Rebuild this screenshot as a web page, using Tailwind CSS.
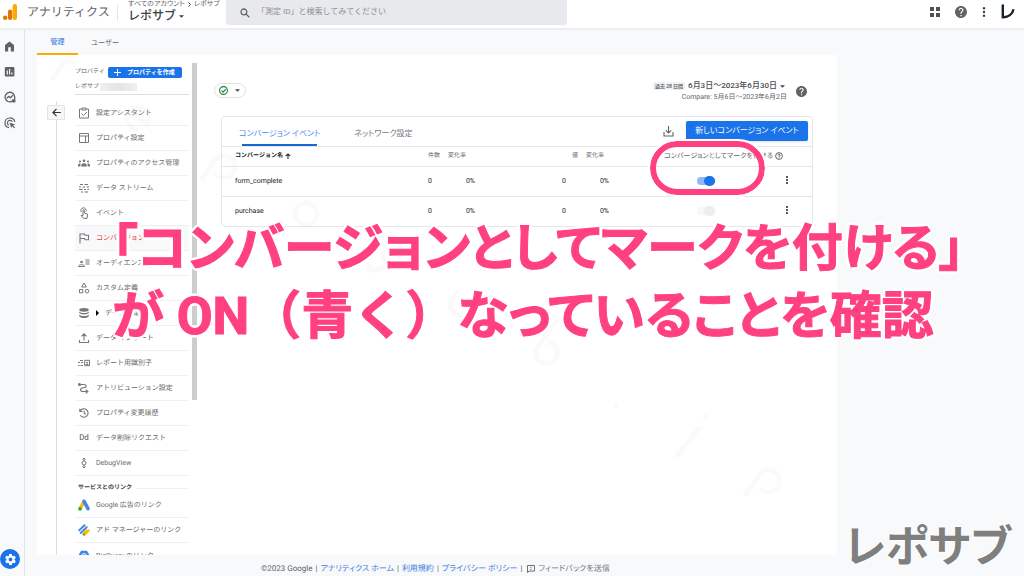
<!DOCTYPE html>
<html lang="ja">
<head>
<meta charset="utf-8">
<meta name="viewport" content="width=device-width, initial-scale=1">
<title>アナリティクス - コンバージョン</title>
<script src="https://cdn.jsdelivr.net/npm/@tailwindcss/browser@4"></script>
</head>
<body class="relative flex h-screen flex-col overflow-hidden bg-[#f8f9fb] font-['Roboto','Noto_Sans_CJK_JP',sans-serif] text-[7px] leading-[10px] text-[#5f6368] [text-rendering:geometricPrecision]">

<header class="flex h-[30px] shrink-0 items-start border-b-2 border-[#eceef1] bg-white">
  <svg class="mt-[4px] ml-[3px] h-4 w-[14px] shrink-0" viewBox="0 0 14 16" aria-hidden="true"><rect x="9.700" y="0" width="4.300" height="16" rx="2.100" fill="#f9ab00"/><rect x="5" y="5.500" width="4.300" height="10.500" rx="2.100" fill="#e37400"/><circle cx="2.200" cy="13.800" r="2.200" fill="#e37400"/></svg>
  <span class="mt-[4px] ml-[10px] w-[90px] shrink-0 text-[12px] leading-4 whitespace-nowrap">アナリティクス</span>
  <span class="mt-1 h-[17px] w-px shrink-0 bg-[#e4e6e9]"></span>
  <div class="ml-[10px] w-[98px] shrink-0 whitespace-nowrap">
    <div class="flex h-[9px] items-center gap-[3px] text-[7px] leading-[9px] [font-feature-settings:'palt']"><span>すべてのアカウント</span>
      <svg class="h-[5px] w-[3px]" viewBox="0 0 3 5" fill="none" stroke="#444" stroke-width="1"><path d="M.5.5l2 2-2 2"/></svg><span>レポサブ</span></div>
    <button class="flex items-center gap-[3px] text-[12px] leading-[14px] font-medium text-[#3c4043]">レポサブ
      <svg class="h-[3px] w-[5px]" viewBox="0 0 6 3" fill="#3c4043"><path d="M0 0h6L3 3z"/></svg></button>
  </div>
  <label class="flex h-[25px] w-[341px] items-center rounded-b-[3px] bg-[#e8e9ed] pl-[14px]">
    <svg class="h-[10px] w-[10px] shrink-0" viewBox="0 0 10 10" fill="none" stroke="#5f6368" stroke-width="1.300"><circle cx="3.900" cy="3.900" r="2.900"/><path d="M6.100 6.100l3.200 3.200"/></svg>
    <input type="text" aria-label="検索" placeholder="「測定 ID」と検索してみてください" class="mb-[2px] ml-[7px] min-w-0 flex-1 bg-transparent text-[8px] leading-3 outline-none placeholder:text-[#8b8f94]">
  </label>
  <div class="mt-[4px] mr-[9px] ml-auto flex items-center gap-[15px]">
    <button aria-label="アプリ"><svg class="block h-[10px] w-[10px]" viewBox="0 0 10 10" fill="#4d5156"><path d="M0 0h4v4H0zM6 0h4v4H6zM0 6h4v4H0zM6 6h4v4H6z"/></svg></button>
    <button aria-label="ヘルプ"><svg class="block h-[12px] w-[12px]" viewBox="2 2 20 20" fill="#5f6368"><path d="M12 2C6.500 2 2 6.500 2 12s4.500 10 10 10 10-4.500 10-10S17.500 2 12 2zm1 17h-2v-2h2v2zm2.100-7.700-.9.900C13.400 12.900 13 13.500 13 15h-2v-.5c0-1.100.4-2.100 1.200-2.800l1.200-1.300c.4-.3.6-.8.6-1.400 0-1.100-.9-2-2-2s-2 .9-2 2H8c0-2.200 1.800-4 4-4s4 1.800 4 4c0 .9-.4 1.700-.9 2.300z"/></svg></button>
    <button aria-label="メニュー"><svg class="block h-[10px] w-[4px]" viewBox="0 0 4 10" fill="#3c4043"><circle cx="2" cy="1.200" r="1.200"/><circle cx="2" cy="5" r="1.200"/><circle cx="2" cy="8.800" r="1.200"/></svg></button>
    <button aria-label="アカウント"><svg class="block h-[15px] w-[14px]" viewBox="0 0 14 15" fill="none" stroke="#15232e" stroke-width="2.400"><path d="M1.800.5v12.700c5.500.2 9.700-3 10.700-8"/></svg></button>
  </div>
</header>

<div class="flex min-h-0 flex-1">
  <nav class="flex w-[25px] shrink-0 flex-col items-start border-r border-[#dfe1e5] pt-[11px]" aria-label="メイン">
    <div class="flex flex-col gap-[14px] pl-[4px]">
      <a href="#" aria-label="ホーム"><svg class="block h-[11px] w-[11px]" viewBox="0 0 11 11" fill="#5f6368"><path d="M5.500.5L1 4v6.500h3.200V6.300h2.600v4.200H10V4z"/></svg></a>
      <a href="#" aria-label="レポート"><svg class="block h-[11px] w-[11px]" viewBox="0 0 11 11"><rect x=".8" y="1" width="9.600" height="9.400" rx="1.200" fill="#5f6368"/><path d="M3.300 4.500v4M5.600 3v5.500M7.900 6.500v2" stroke="#fff" stroke-width="1.100"/></svg></a>
      <a href="#" aria-label="探索"><svg class="block h-[12px] w-[12px]" viewBox="0 0 12 12" fill="none" stroke="#5f6368" stroke-width="1.300"><path d="M8 10.400A4.800 4.800 0 1 1 10.700 6v4.600H8"/><path d="M2.800 7.300l2-2 1.600 1.500 2.500-2.600"/><path d="M8.300 8.500l2.500 2.500" stroke-width="2"/></svg></a>
      <a href="#" aria-label="広告"><svg class="block h-[12px] w-[12px]" viewBox="0 0 12 12" fill="none" stroke="#5f6368" stroke-width="1.200"><path d="M5 10.700A4.900 4.900 0 1 1 10.700 5"/><path d="M4.800 8.300A2.600 2.600 0 1 1 8.300 4.800"/><path d="M5.500 5.500l5.600 1.900-2 1 2 2.200-.8.700-2.200-2-.9 1.800z" fill="#5f6368" stroke="none"/></svg></a>
    </div>
    <button aria-label="管理" class="mt-auto mb-[7px] flex h-[20px] w-[20px] items-center justify-center rounded-full bg-[#1a73e8]">
      <svg class="h-[13px] w-[13px]" viewBox="0 0 24 24" fill="#fff"><path d="M19.430 12.980c.04-.32.070-.64.070-.98s-.030-.66-.070-.98l2.110-1.650c.19-.15.240-.42.120-.64l-2-3.460c-.12-.22-.39-.3-.61-.22l-2.490 1c-.52-.4-1.080-.73-1.690-.98l-.38-2.650C14.460 2.180 14.250 2 14 2h-4c-.25 0-.46.180-.49.420l-.38 2.650c-.61.250-1.170.59-1.690.98l-2.490-1c-.23-.09-.49 0-.61.220l-2 3.460c-.13.220-.07.490.12.640l2.110 1.650c-.04.320-.07.650-.07.980s.03.660.07.980l-2.110 1.650c-.19.150-.24.420-.12.640l2 3.460c.12.220.39.300.61.220l2.490-1c.52.400 1.080.730 1.690.980l.38 2.650c.03.240.24.420.49.420h4c.25 0 .46-.18.490-.42l.38-2.650c.61-.25 1.170-.59 1.690-.98l2.490 1c.23.090.49 0 .61-.22l2-3.460c.12-.22.070-.49-.12-.64l-2.110-1.650zM12 15.500c-1.930 0-3.500-1.570-3.500-3.500s1.570-3.500 3.500-3.500 3.500 1.570 3.500 3.500-1.570 3.500-3.500 3.500z"/></svg>
    </button>
  </nav>

  <div class="flex min-w-0 flex-1 flex-col pl-[12px]">
    <div class="flex h-[25px] shrink-0" role="tablist">
      <button role="tab" aria-selected="true" class="w-[41px] border-b-2 border-[#f9ab00] text-[7px] font-medium text-[#3f7fe0]">管理</button>
      <button role="tab" class="w-[54px] text-[7px]">ユーザー</button>
    </div>

    <div class="mr-[187px] flex min-h-0 flex-1 overflow-hidden bg-white">
      <div class="flex w-[38px] shrink-0 flex-col items-center pt-[46px]">
        <span class="h-1 w-px bg-[#dcdcdc]"></span>
        <button aria-label="戻る" class="flex h-[15px] w-[18px] items-center justify-center rounded-[1px] border border-[#e4e4e4] bg-[#f7f7f7]"><svg class="h-[9px] w-[9px]" viewBox="0 0 9 9" fill="none" stroke="#333" stroke-width="1.200"><path d="M8.800 4.500H1M4.500.8L.9 4.500l3.600 3.700"/></svg></button>
        <span class="w-px flex-1 bg-[#dcdcdc]"></span>
      </div>

      <section class="w-[114px] shrink-0 pt-[11px]">
        <div class="flex h-[12px] items-center justify-between pr-[7px] text-[6px]"><span>プロパティ</span>
          <button class="flex h-[11px] w-[74px] items-center gap-[6px] rounded-[2px] bg-[#1a73e8] pl-[6px] font-bold text-white"><svg class="h-[7px] w-[7px]" viewBox="0 0 7 7" stroke="#fff"><path d="M3.500 0v7M0 3.500h7"/></svg>プロパティを作成</button></div>
        <div class="mt-[4px] mb-[6px] flex h-[13px] items-start gap-[1px] border-b border-[#e0e0e0] text-[6px]"><span>レポサブ</span><span class="mt-px h-2 w-[37px] bg-linear-to-r from-[#f0f0f0] via-[#e4e4e4] to-[#efefef]"></span></div>
        <ul class="text-[7px] whitespace-nowrap text-[#66696d]">
          <li><a href="#" class="flex h-[25px] items-center gap-[6px] border-b border-[#f0f0f0] pl-[3px]"><svg class="h-3 w-3" viewBox="0 0 12 12" fill="none" stroke="#777"><path d="M4 2H1.500v9h9V2H8"/><path d="M4 1h4v2H4z"/><path d="M3.500 6.500l2 2 3.500-3.500"/></svg>設定アシスタント</a></li>
          <li><a href="#" class="flex h-[25px] items-center gap-[6px] border-b border-[#f0f0f0] pl-[3px]"><svg class="h-3 w-3" viewBox="0 0 12 12" fill="none" stroke="#777"><path d="M1.500 1.500h9v9h-9zM1.500 4h9M7.500 4v6.500"/></svg>プロパティ設定</a></li>
          <li><a href="#" class="flex h-[25px] items-center gap-[6px] border-b border-[#f0f0f0] pl-[3px]"><svg class="h-3 w-3" viewBox="0 0 12 12" fill="#777"><circle cx="6" cy="3.800" r="1.400"/><circle cx="2" cy="4.500" r="1.100"/><circle cx="10" cy="4.500" r="1.100"/><path d="M3.300 9.500V8c0-2.400 5.400-2.400 5.400 0v1.500zM0 9.500V8.200c0-1.400 1.300-1.800 2.600-1.500-.3.700-.2 2-.2 2.800zM12 9.500V8.200c0-1.400-1.300-1.800-2.600-1.500.3.700.2 2 .2 2.800z"/></svg>プロパティのアクセス管理</a></li>
          <li><a href="#" class="flex h-[25px] items-center gap-[6px] border-b border-[#f0f0f0] pl-[3px]"><svg class="h-3 w-3" viewBox="0 0 12 12" fill="none" stroke="#777" stroke-width="1.100"><path d="M2 2.500h3M6.500 2.500H10M1 5h2M4.500 5H7M8.500 5H11M1 7.500h3.500M6 7.500h2M9.500 7.500H11M3 10h2M6.500 10H10"/></svg>データ ストリーム</a></li>
          <li><a href="#" class="flex h-[25px] items-center gap-[6px] border-b border-[#f0f0f0] pl-[3px]"><svg class="h-3 w-3" viewBox="0 0 12 12" fill="none" stroke="#777"><path d="M3.200 5A2.700 2.700 0 1 1 8 4.500"/><path d="M5 8.500V3.200c0-.9 1.300-.9 1.300 0v2.900l3.200.9-.4 4.300H5.500L3 8.500z"/></svg>イベント</a></li>
          <li><a href="#" class="flex h-[25px] items-center gap-[6px] border-b border-[#f0f0f0] bg-[#f8f9fb] pl-[3px] text-[#dc4437]"><svg class="h-3 w-3" viewBox="0 0 12 12" fill="none" stroke="#777" stroke-width="1.100"><path d="M2 11.500V2h4.500l.5 1.200h3.500v4.600H7L6.500 6.500H2"/></svg>コンバージョン</a></li>
          <li><a href="#" class="flex h-[25px] items-center gap-[6px] border-b border-[#f0f0f0] pl-[3px]"><svg class="h-3 w-3" viewBox="0 0 12 12" fill="none" stroke="#777"><circle cx="3.500" cy="5" r="1.300" fill="#777" stroke="none"/><path d="M.5 9.500c0-2.500 6-2.500 6 0zM7.500 3h4M7.500 5h4M7.500 7h4"/></svg>オーディエンス</a></li>
          <li><a href="#" class="flex h-[25px] items-center gap-[6px] border-b border-[#f0f0f0] pl-[3px]"><svg class="h-3 w-3" viewBox="0 0 12 12" fill="none" stroke="#777"><path d="M6 1l2.300 4H3.700zM1.500 7.500h3.300v3.300H1.500z"/><circle cx="9" cy="9.200" r="1.800"/></svg>カスタム定義</a></li>
          <li><a href="#" class="flex h-[25px] items-center gap-[2px] border-b border-[#f0f0f0] pl-[3px]"><svg class="h-3 w-3" viewBox="0 0 12 12" fill="#777"><ellipse cx="6" cy="2.800" rx="4.800" ry="1.900"/><path d="M1.200 4.500c1.500 2 8.100 2 9.600 0v1.300c-1 2.300-8.600 2.300-9.600 0zM1.200 7.500c1.500 2 8.100 2 9.600 0v1.500c-1 2.700-8.600 2.700-9.600 0z"/></svg><svg class="mx-[4px] h-[6px] w-[3px]" viewBox="0 0 3 6"><path d="M0 0l3 3-3 3z"/></svg>データ設定</a></li>
          <li><a href="#" class="flex h-[25px] items-center gap-[6px] border-b border-[#f0f0f0] pl-[3px]"><svg class="h-3 w-3" viewBox="0 0 12 12" fill="none" stroke="#777" stroke-width="1.100"><path d="M6 8.500V2M3.500 4.300L6 1.800l2.500 2.500M1.500 8v2.500h9V8"/></svg>データ インポート</a></li>
          <li><a href="#" class="flex h-[25px] items-center gap-[6px] border-b border-[#f0f0f0] pl-[3px]"><svg class="h-3 w-3" viewBox="0 0 12 12" fill="none" stroke="#777"><path d="M2 3.500h3M0 5.500h2M3 5.500h2M0 8.500h1.500M2.500 8.500H5M6.700 3.300h4.800v5.400H6.700z"/><path d="M8 8c0-1.500 2.200-1.500 2.200 0" fill="#777"/><circle cx="9.100" cy="5.500" r=".5"/></svg>レポート用識別子</a></li>
          <li><a href="#" class="flex h-[25px] items-center gap-[6px] border-b border-[#f0f0f0] pl-[3px]"><svg class="h-3 w-3" viewBox="0 0 12 12" fill="none" stroke="#777" stroke-width="1.100"><path d="M0 2.500h5.500c3.500 0 3.500 3 0 3.300-4 .3-4 3.700 0 3.700H9"/><circle cx="1.500" cy="2.500" r="1"/><path d="M7.700 7.600l2.200 1.900-2.200 1.900"/></svg>アトリビューション設定</a></li>
          <li><a href="#" class="flex h-[25px] items-center gap-[6px] border-b border-[#f0f0f0] pl-[3px]"><svg class="h-3 w-3" viewBox="0 0 12 12" fill="none" stroke="#777" stroke-width="1.100"><path d="M2.200 4A4.200 4.200 0 1 1 2.300 8.200M1.800 1.800v2.700h2.700M6.200 3.800v2.500l1.800 1"/></svg>プロパティ変更履歴</a></li>
          <li><a href="#" class="flex h-[25px] items-center gap-[6px] border-b border-[#f0f0f0] pl-[3px]"><span class="w-3 text-center text-[8px] font-medium text-[#777]">Dd</span>データ削除リクエスト</a></li>
          <li><a href="#" class="flex h-[25px] items-center gap-[6px] border-b border-[#f0f0f0] pl-[3px]"><svg class="h-3 w-3" viewBox="0 0 12 12" fill="none" stroke="#777"><path d="M6 1v3M6 8v3M4.500 2.500L6 1l1.500 1.500M4.500 9.500L6 11l1.500-1.500"/><circle cx="6" cy="6" r="2"/></svg>DebugView</a></li>
        </ul>
        <h2 class="flex h-[17px] items-center gap-1 pt-[7px] pl-[3px] text-[6px] leading-[10px] font-bold whitespace-nowrap text-[#3c4043]">サービスとのリンク<span class="h-px flex-1 bg-[#f0f0f0]"></span></h2>
        <ul class="text-[7px] whitespace-nowrap text-[#66696d]">
          <li><a href="#" class="flex h-[25px] items-center gap-[6px] border-b border-[#f0f0f0] pl-[3px]"><svg class="h-3 w-3" viewBox="0 0 12 12" fill="none" stroke-width="3.600" stroke-linecap="round"><path d="M6 2.500L2.200 9.500" stroke="#fbbc04"/><path d="M6 2.300l4 7.300" stroke="#4285f4"/><circle cx="2" cy="9.800" r="1.900" fill="#34a853"/></svg>Google 広告のリンク</a></li>
          <li><a href="#" class="flex h-[25px] items-center gap-[6px] border-b border-[#f0f0f0] pl-[3px]"><svg class="h-3 w-3" viewBox="0 0 12 12" fill="none" stroke-width="1.900" stroke-linecap="round"><path d="M1.200 6.300L6.300 1.500M2.700 9L8.700 3.200" stroke="#4285f4"/><path d="M5.300 9.500l3.400-3.300M6.300 11l4.600-4.500" stroke="#fbbc04"/><circle cx="6.400" cy="1.500" r="1.100" fill="#34a853"/><circle cx="5.700" cy="10.500" r="1.100" fill="#34a853"/></svg>アド マネージャーのリンク</a></li>
          <li><a href="#" class="flex h-[25px] items-center gap-[6px] pl-[3px]"><svg class="h-3 w-3" viewBox="0 0 12 12"><path d="M3 .8h6l3 5.200-3 5.200H3L0 6z" fill="#4285f4"/><circle cx="6" cy="5.800" r="2.200" fill="none" stroke="#fff"/></svg>BigQuery のリンク</a></li>
        </ul>
      </section>
      <div class="mt-[8px] ml-[3px] h-[337px] w-[5px] shrink-0 bg-[#cdcdcd]"></div>

      <main class="min-w-0 flex-1 pr-[24px] pl-[17px]">
        <div class="flex h-[61px] items-start justify-between">
          <button aria-label="ステータス" class="mt-[28px] flex h-[15px] w-[32px] items-center gap-[7px] rounded-full border border-[#e0e2e5] pl-[4px]"><svg class="h-[9px] w-[9px]" viewBox="0 0 9 9" fill="none" stroke="#188038" stroke-width="1.100"><circle cx="4.500" cy="4.500" r="3.900"/><path d="M2.500 4.600l1.500 1.500 2.800-3"/></svg><svg class="h-[3px] w-[5px]" viewBox="0 0 6 3" fill="#444"><path d="M0 0h6L3 3z"/></svg></button>
          <div class="mt-[25px] mr-[6px] flex items-center gap-[9px] whitespace-nowrap">
            <div class="flex flex-col items-end">
              <button class="flex h-[12px] items-center gap-[3px] text-[8px] font-medium text-[#4a4d51] [font-feature-settings:'palt']"><span class="bg-[#f1f2f4] px-[2px] text-[5px] leading-[8px]">過去 28 日間</span>6月3日〜2023年6月30日<svg class="mr-[2px] h-[3px] w-[5px]" viewBox="0 0 6 3" fill="#444"><path d="M0 0h6L3 3z"/></svg></button>
              <span class="text-[7px] leading-[10px] [font-feature-settings:'palt']">Compare: 5月6日〜2023年6月2日</span>
            </div>
            <button aria-label="ヘルプ"><svg class="block h-[11px] w-[11px]" viewBox="2 2 20 20" fill="#5f6368"><path d="M12 2C6.500 2 2 6.500 2 12s4.500 10 10 10 10-4.500 10-10S17.500 2 12 2zm1 17h-2v-2h2v2zm2.100-7.700-.9.900C13.400 12.900 13 13.500 13 15h-2v-.5c0-1.100.4-2.100 1.200-2.800l1.200-1.300c.4-.3.6-.8.6-1.400 0-1.100-.9-2-2-2s-2 .9-2 2H8c0-2.200 1.800-4 4-4s4 1.800 4 4c0 .9-.4 1.700-.9 2.300z"/></svg></button>
          </div>
        </div>

        <div class="ml-[7px] overflow-hidden rounded-[4px] border border-[#e4e6e9]">
          <div class="flex h-[30px] items-center border-b border-[#e4e6e9] pr-[4px] pl-[17px]">
            <div class="flex h-full items-end gap-[34px]" role="tablist">
              <button role="tab" aria-selected="true" class="flex flex-col items-center gap-[5px] text-[8px] leading-[10px] text-[#4a8af0] [font-feature-settings:'palt']">コンバージョン イベント<span class="h-[2px] w-[75px] bg-[#1967d2]"></span></button>
              <button role="tab" class="mb-[7px] text-[8px] leading-[10px] text-[#74787d] [font-feature-settings:'palt']">ネットワーク設定</button>
            </div>
            <button aria-label="ダウンロード" class="ml-auto"><svg class="block h-[11px] w-[11px]" viewBox="0 0 11 11" fill="none" stroke="#5f6368" stroke-width="1.100"><path d="M5.500 0v7M2.800 4.300l2.700 2.700 2.700-2.700M1 6v4h9V6"/></svg></button>
            <button class="mb-px ml-[12px] h-[20px] w-[122px] rounded-[2px] bg-[#1a73e8] text-[8px] text-white shadow-sm [font-feature-settings:'palt']">新しいコンバージョン イベント</button>
          </div>
          <table class="w-full table-fixed border-collapse whitespace-nowrap">
            <colgroup><col><col class="w-[60px]"><col class="w-[35px]"><col class="w-[103px]"><col class="w-[31px]"><col class="w-[174px]"><col class="w-[29px]"></colgroup>
            <thead class="text-[6px]">
              <tr class="h-[19px] border-b border-[#e4e6e9]">
                <th class="pl-[13px] text-left font-bold text-[#202124]"><span class="flex items-center gap-[2px]">コンバージョン名<svg class="h-[6px] w-[6px]" viewBox="0 0 7 7" fill="none" stroke="#202124" stroke-width="1.200"><path d="M3.500 7V1M.8 3.700L3.500 1l2.700 2.700"/></svg></span></th>
                <th class="text-right font-normal">件数</th><th class="pl-[8px] text-left font-normal">変化率</th>
                <th class="text-right font-normal">値</th><th class="pl-[8px] text-left font-normal">変化率</th>
                <th class="font-normal"><span class="flex items-center justify-end gap-[2px] text-[7px] [font-feature-settings:'palt']">コンバージョンとしてマークを付ける<svg class="h-2 w-2" viewBox="0 0 8 8" fill="none" stroke="#3c4043"><circle cx="4" cy="4" r="3.400" stroke-width=".8"/><path d="M2.900 3.300c0-1.500 2.300-1.400 2.200 0 0 .7-1.100.8-1.100 1.600M4 5.400v.9" stroke-width=".9"/></svg></span></th>
                <th></th>
              </tr>
            </thead>
            <tbody class="text-[7px] text-[#202124]">
              <tr class="h-[30px] border-b border-[#e4e6e9]">
                <td class="pl-[13px]">form_complete</td><td class="pr-[8px] text-right">0</td><td class="text-right">0%</td><td class="pr-[12px] text-right">0</td><td class="text-right">0%</td>
                <td class="pr-[68px] text-right"><input type="checkbox" role="switch" checked aria-label="form_complete をコンバージョンとしてマークを付ける" class="relative inline-block h-2 w-[18px] appearance-none rounded-full bg-[#8fb8f5] align-middle before:absolute before:-top-[1px] before:right-0 before:h-[10px] before:w-[11px] before:rounded-full before:bg-[#1a73e8]"></td>
                <td class="pl-[2px]"><button aria-label="その他"><svg class="block h-2 w-[4px]" viewBox="0 0 4 8" fill="#202124"><circle cx="2" cy="1" r="1"/><circle cx="2" cy="4" r="1"/><circle cx="2" cy="7" r="1"/></svg></button></td>
              </tr>
              <tr class="h-[30px]">
                <td class="pl-[13px]">purchase</td><td class="pr-[8px] text-right">0</td><td class="text-right">0%</td><td class="pr-[12px] text-right">0</td><td class="text-right">0%</td>
                <td class="pr-[68px] text-right"><input type="checkbox" role="switch" checked disabled aria-label="purchase をコンバージョンとしてマークを付ける" class="relative inline-block h-2 w-[18px] appearance-none rounded-full bg-[#f7f7f7] align-middle before:absolute before:-top-[1px] before:right-0 before:h-[10px] before:w-[11px] before:rounded-full before:bg-[#eeeeee]"></td>
                <td class="pl-[2px]"><button aria-label="その他"><svg class="block h-2 w-[4px]" viewBox="0 0 4 8" fill="#202124"><circle cx="2" cy="1" r="1"/><circle cx="2" cy="4" r="1"/><circle cx="2" cy="7" r="1"/></svg></button></td>
              </tr>
            </tbody>
          </table>
        </div>
      </main>
    </div>

    <footer class="flex h-[21px] shrink-0 items-center gap-[3px] pt-[6px] pl-[224px] text-[8px] leading-[10px] whitespace-nowrap [font-feature-settings:'palt']">
      <span>©2023 Google</span><span>|</span><a href="#" class="text-[#3f7fe0]">アナリティクス ホーム</a><span>|</span><a href="#" class="text-[#3f7fe0]">利用規約</a><span>|</span><a href="#" class="text-[#3f7fe0]">プライバシー ポリシー</a><span>|</span>
      <a href="#" class="ml-[2px] flex items-center gap-[3px] text-[#74787d]"><svg class="h-2 w-2" viewBox="0 0 8 8" fill="none" stroke="#5f6368"><path d="M.5 7.500v-7h7v5.600H2zM4 1.700v1.600M4 4v1" stroke-width=".9"/></svg>フィードバックを送信</a>
    </footer>
  </div>
</div>

<!-- Watermark -->
<svg class="pointer-events-none absolute top-0 left-0 h-[576px] w-[840px]" viewBox="0 0 840 576" fill="none" stroke="#000" stroke-opacity=".02" stroke-width="5">
  <path d="M51 80l14-18q4-2 10 1"/>
  <path d="M129 112l18 12A11 11 0 1 0 138 129"/>
  <path d="M201 180l13-18A11 11 0 1 1 214 171"/>
  <circle cx="306" cy="214" r="11"/>
  <path d="M394 252q-9-5-11 1t4 9-8 7-9-6"/>
  <path d="M458 290l-7 11q-3 9 6 13t15-5l6-9"/>
  <path d="M558 319l-20 27A11 11 0 1 0 547 342"/>
  <path d="M676 457l24-30M744 496l17-23A11 11 0 1 1 760 488"/>
  <g fill="#000" fill-opacity=".02" stroke="none"><circle cx="706" cy="417" r="3"/><circle cx="616" cy="405" r="3"/></g>
</svg>

<!-- Annotations -->
<div class="pointer-events-none absolute top-[141px] left-[650px] h-[54px] w-[115px] rounded-full border-[6px] border-[#ff4081] outline-2 outline-white"></div>
<p class="pointer-events-none absolute top-[216px] left-[112px] leading-[67px] font-bold whitespace-nowrap text-[#ff4081] [-webkit-text-stroke:1px_#ff4081] [font-feature-settings:'palt'] [text-shadow:3px_0_white,-3px_0_white,0_3px_white,0_-3px_white,2px_2px_white,-2px_2px_white,2px_-2px_white,-2px_-2px_white]"><span class="block text-[51px]">「コンバージョンとしてマークを付ける」</span><span class="block text-[52px]">が ON<span class="[font-feature-settings:normal]">（青く）</span>なっていることを確認</span></p>
<p class="pointer-events-none absolute right-[13px] bottom-0 text-[44px] leading-[58px] font-bold whitespace-nowrap text-[#7f7f7f] [-webkit-text-stroke:2px_white] [font-feature-settings:'palt'] [paint-order:stroke]">レポサブ</p>
</body>
</html>
